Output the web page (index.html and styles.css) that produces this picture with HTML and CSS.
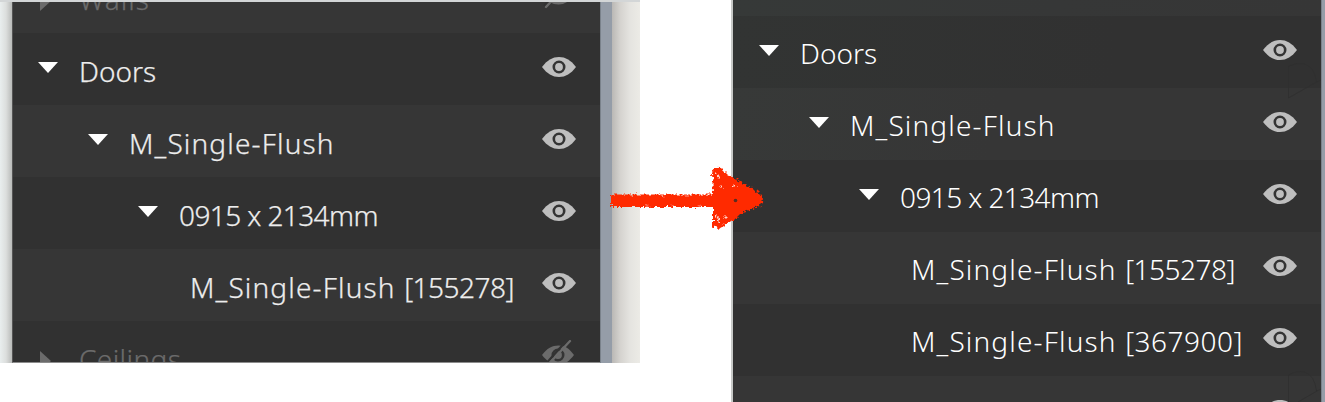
FILE: index.html
```html
<!DOCTYPE html>
<html lang="en">
<head>
<meta charset="utf-8">
<title>Model browser</title>
<link rel="stylesheet" href="styles.css">
</head>
<body>
<svg class="defs" width="0" height="0" aria-hidden="true">
  <symbol id="eye" viewBox="0 0 34 20">
    <path fill="currentColor" d="M0 10C5 3.3 10.5 0 17 0s12 3.3 17 10c-5 6.7-10.500 10-17 10S5 16.700 0 10z"/>
    <circle class="ring" cx="17" cy="10" r="5.2"/>
  </symbol>
  <symbol id="eye-off" viewBox="0 0 34 30">
    <path fill="currentColor" d="M0 15C5 8.300 10 5.500 16.500 5.500S27 8.300 32 15c-5 6.700-9.500 9.500-15.500 9.500S5 21.700 0 15z"/>
    <circle class="ring" cx="16" cy="15" r="5.2"/>
    <path class="slash-gap" d="M2 26L26 -1"/>
    <path class="slash" d="M4 27L28 1"/>
  </symbol>
  <symbol id="down" viewBox="0 0 20 11"><path fill="currentColor" d="M0 0h20L10 11z"/></symbol>
  <symbol id="right" viewBox="0 0 11 20"><path fill="currentColor" d="M0 0l11 10L0 20z"/></symbol>
</svg>
<main class="stage">
  <section class="before">
    <div class="edge-left"></div>
    <div class="tree">
      <div class="row muted"><svg class="caret-right"><use href="#right"/></svg><span class="label walls">Walls</span><svg class="eye-off"><use href="#eye-off"/></svg></div>
      <div class="row dark"><svg class="caret"><use href="#down"/></svg><span class="label doors">Doors</span><svg class="eye"><use href="#eye"/></svg></div>
      <div class="row level-2"><svg class="caret"><use href="#down"/></svg><span class="label family">M_Single-Flush</span><svg class="eye"><use href="#eye"/></svg></div>
      <div class="row dark level-3"><svg class="caret"><use href="#down"/></svg><span class="label size">0915 x 2134mm</span><svg class="eye"><use href="#eye"/></svg></div>
      <div class="row level-4"><span class="label family">M_Single-Flush <span class="id">[155278]</span></span><svg class="eye"><use href="#eye"/></svg></div>
      <div class="row dark muted"><svg class="caret-right"><use href="#right"/></svg><span class="label ceilings">Ceilings</span><svg class="eye-off"><use href="#eye-off"/></svg></div>
    </div>
    <div class="scroll"></div>
    <div class="edge-right"></div>
  </section>
  <section class="after">
    <div class="tree">
      <div class="row"></div>
      <div class="row dark"><svg class="caret"><use href="#down"/></svg><span class="label doors">Doors</span><svg class="eye"><use href="#eye"/></svg></div>
      <div class="row level-2"><svg class="caret"><use href="#down"/></svg><span class="label family">M_Single-Flush</span><svg class="eye"><use href="#eye"/></svg></div>
      <div class="row dark level-3"><svg class="caret"><use href="#down"/></svg><span class="label size">0915 x 2134mm</span><svg class="eye"><use href="#eye"/></svg></div>
      <div class="row level-4"><span class="label family">M_Single-Flush <span class="id">[155278]</span></span><svg class="eye"><use href="#eye"/></svg></div>
      <div class="row dark level-4"><span class="label family">M_Single-Flush <span class="id-wide">[367900]</span></span><svg class="eye"><use href="#eye"/></svg></div>
      <div class="row"><svg class="eye"><use href="#eye"/></svg></div>
      <svg class="trace" viewBox="0 0 33 402"><path d="M.5 98V66q9-4 16-2 10 3 12 18l5-2M.5 98l28-16M.5 402v-27q9-5 16-3 10 3 12 19l5-2M10 402l19-11"/></svg>
    </div>
    <div class="scroll"></div>
  </section>
  <svg class="arrow" viewBox="0 0 160 72">
    <defs>
      <filter id="rough" x="-5%" y="-10%" width="110%" height="120%">
        <feTurbulence type="fractalNoise" baseFrequency=".35" numOctaves="2" seed="4"/>
        <feDisplacementMap in="SourceGraphic" scale="6" xChannelSelector="R" yChannelSelector="G"/>
      </filter>
    </defs>
    <g filter="url(#rough)">
      <path class="ink" d="M5 31.500H107L106 9Q109 4 115 5L122 12L135 19L151 28Q158 34 157 40L147 46L137 49L130 56L122 59L113 66L107 63L107 44H5z"/>
      <path class="hole" d="M111 11l2 4M110 52l4 8M128 22l1 1M115 23l1 1M119 54l1 1"/>
      <path class="hole fine" d="M24 33l2 0M40 43l2 0M55 33l3 1M66 42l2 0M79 33l3 0M92 43l2 0"/>
    </g>
    <circle class="speck" cx="129.500" cy="37.500" r="1.800"/>
  </svg>
</main>
</body>
</html>
```

FILE: styles.css
```css
* { box-sizing: border-box; }
body { margin: 0; background: #fff; font-family: "Noto Sans", "Open Sans", sans-serif; }
.defs { position: absolute; }
.stage { position: relative; display: flex; align-items: flex-start; width: 1325px; height: 402px; overflow: hidden; }

.before { display: flex; width: 640px; height: 363px; margin-right: 91px; border-top: 2px solid #d3d6d7; }
.edge-left { width: 12px; background: linear-gradient(90deg, #e9eeee, #dcdedd 50%, #b9bbb9); }
.edge-right { width: 28px; background: linear-gradient(90deg, #bab8b5, #d5d3cf 30%, #e5e4e0 65%, #ecebe6); }
.scroll { width: 12px; background: #959da8; border-left: 1px solid #7a828b; }

.tree { position: relative; width: 588px; display: flex; flex-direction: column; overflow: hidden; background: #363636; }
.before .tree { border-left: 1px solid #555; border-bottom: 1px solid #8c8c8c; }
.row { flex: none; display: flex; align-items: flex-start; height: 72px; padding-left: 26px; padding-right: 24px; color: #fff; background: #363636; }
.before .row { padding-left: 25px; color: #ededed; }
.before .row:first-child { margin-top: -41px; }
.after .row:first-child { margin-top: -56px; }
.row.dark { background: #313131; }
.row.level-2 { padding-left: 76px; }
.row.level-3 { padding-left: 126px; }
.row.level-4 { padding-left: 178px; }
.before .row.level-2 { padding-left: 75px; }
.before .row.level-3 { padding-left: 125px; }
.before .row.level-4 { padding-left: 177px; }
.before .row.muted { color: #6b6b6b; }

.caret { flex: none; width: 20px; height: 11px; margin: 29px 21px 0 0; color: #fff; }
.caret-right { flex: none; width: 11px; height: 20px; margin: 30px 28px 0 2px; }
.label { flex: none; margin-top: 18px; font-size: 28px; font-weight: 300; line-height: 38px; white-space: nowrap; }
.before .label { margin-top: 19px; -webkit-text-stroke: .25px currentColor; }
.family { letter-spacing: 1.15px; }
.size { letter-spacing: -.6px; }
.id { letter-spacing: -.5px; }
.id-wide { letter-spacing: .5px; }
.walls { letter-spacing: 1px; }
.ceilings { letter-spacing: .4px; }
.eye { flex: none; width: 34px; height: 20px; margin: 24px 0 0 auto; color: #bebebe; }
.eye-off { flex: none; width: 34px; height: 30px; margin: 19px 0 0 auto; color: #6b6b6b; }
.ring { fill: none; stroke: #343434; stroke-width: 2.6; }
.slash { stroke: currentColor; stroke-width: 2.3; stroke-linecap: round; }
.slash-gap { stroke: #323232; stroke-width: 2.3; }

.after { display: flex; width: 594px; height: 402px; border-left: 2px solid #c7c9c7; }
.after .scroll { width: 4px; }
.after .row:nth-child(1) { background: linear-gradient(90deg, #363938, #363737 55%, #363636); }
.after .row:nth-child(2) { background: linear-gradient(90deg, #323433, #313131 65%); }
.after .row:nth-child(3) { background: linear-gradient(100deg, #373938, #363636 45%); }
.trace { position: absolute; right: 0; top: 0; width: 33px; height: 402px; fill: none; stroke: #2e2e2e; stroke-width: .8; }
.arrow { position: absolute; left: 606px; top: 163px; width: 160px; height: 72px; }
.ink { fill: #ff2a05; }
.hole { fill: none; stroke: #ffd5cc; stroke-width: 1.6; stroke-linecap: round; }
.hole.fine { stroke: #ff9f8c; stroke-width: 1; }
.speck { fill: #5a2d22; }
```
